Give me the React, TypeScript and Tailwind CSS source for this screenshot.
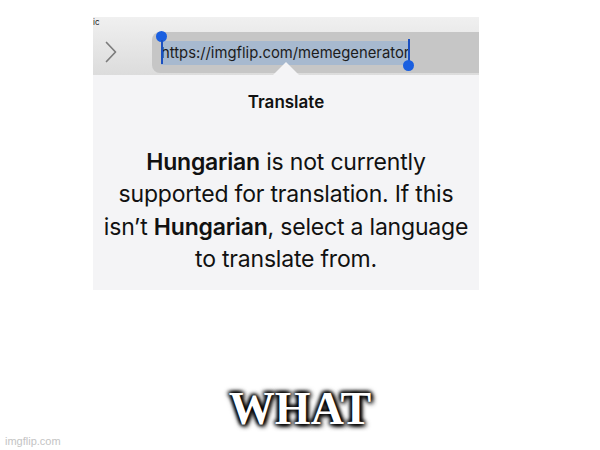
export default function App() {
  return (
    <div className="relative w-[600px] h-[450px] bg-white overflow-hidden" style={{ fontFamily: '"Inter", "Liberation Sans", sans-serif' }}>
      {/* screenshot */}
      <div className="absolute left-[93px] top-[17px] w-[386px] h-[273px] flex flex-col overflow-hidden">
        {/* toolbar */}
        <div className="relative h-[58px] bg-gradient-to-b from-[#f0f0f0] to-[#dcdcdc] flex items-end">
          <span className="absolute left-0 top-0 text-[8px] leading-[10px] text-[#222]">ic</span>
          <div className="w-[59px] h-[58px] flex items-center pl-[12px] pt-[12px]">
            <svg width="12" height="22" viewBox="0 0 12 22" fill="none">
              <path d="M1.5 1.5 L10.5 11 L1.5 20.5" stroke="#7c7c7c" strokeWidth="1.7" strokeLinecap="round" strokeLinejoin="round" />
            </svg>
          </div>
          <div className="relative flex-1 h-[41px] mb-[2px] rounded-l-[8px] bg-[#c6c6c6] flex items-center pl-[9px]">
            <span className="bg-[#a7b9cf] text-[14.8px] leading-[24px] text-[#1c1c1c] pr-[1px]">https://imgflip.com/memegenerator</span>
            {/* selection handles */}
            <div className="absolute left-[4px] top-[-1px] flex flex-col items-center">
              <div className="w-[11px] h-[11px] rounded-full bg-[#1a5fe0]" />
              <div className="w-[2px] h-[24px] bg-[#1a4fc0] -mt-[2px]" />
            </div>
            <div className="absolute left-[251px] top-[7px] flex flex-col items-center">
              <div className="w-[2px] h-[24px] bg-[#1a4fc0]" />
              <div className="w-[11px] h-[11px] rounded-full bg-[#1a5fe0] -mt-[3px]" />
            </div>
          </div>
          {/* caret */}
          <div className="absolute left-[180px] bottom-0 w-0 h-0 border-l-[13px] border-r-[13px] border-b-[13px] border-l-transparent border-r-transparent border-b-[#f4f4f6]" />
        </div>
        {/* panel */}
        <div className="flex-1 bg-[#f4f4f6] flex flex-col items-center text-[#111]">
          <div className="mt-[16px] text-[17px] font-semibold leading-[22px]">Translate</div>
          <p className="mt-[33px] text-center text-[23px] leading-[32.3px] tracking-[-0.2px] whitespace-nowrap">
            <b className="font-semibold">Hungarian</b> is not currently<br />
            supported for translation. If this<br />
            isn’t <b className="font-semibold">Hungarian</b>, select a language<br />
            to translate from.
          </p>
        </div>
      </div>

      {/* caption */}
      <div className="absolute left-0 right-0 top-[383px] flex justify-center">
        <span
          className="text-white text-[46px] font-bold leading-[52px]"
          style={{
            fontFamily: '"Liberation Serif", "DejaVu Serif", serif',
            textShadow: '0 0 4px #000, 0 0 4px #000, 0 0 6px #000, 2px 2px 5px #000, -1px -1px 4px #000',
          }}
        >
          WHAT
        </span>
      </div>

      <span className="absolute left-[5px] top-[433px] text-[11px] text-[#c4c4c4]" style={{ fontFamily: '"Liberation Sans", sans-serif' }}>imgflip.com</span>
    </div>
  );
}
